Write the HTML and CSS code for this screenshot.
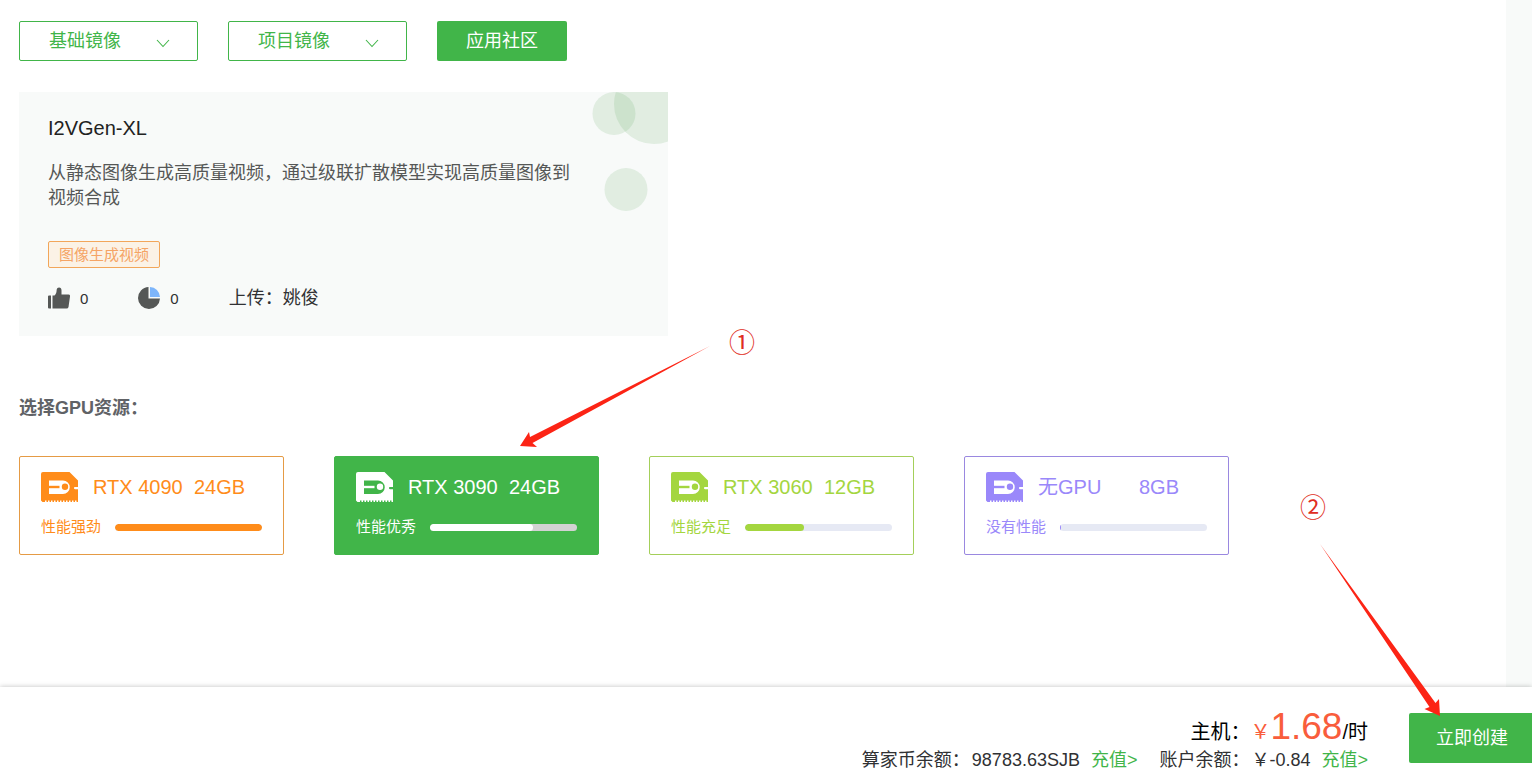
FILE: index.html
```html
<!DOCTYPE html>
<html lang="zh-CN">
<head>
<meta charset="utf-8">
<meta name="viewport" content="width=device-width, initial-scale=1">
<title>创建实例</title>
<link rel="stylesheet" href="styles.css">
</head>
<body>
<svg class="symbols" aria-hidden="true">
  <symbol id="gpu" viewBox="0 0 37 30">
    <path fill="currentColor" fill-rule="evenodd" d="M2 0H28.500L37 8.500V15H34a.8.8 0 0 0 0 2.200H37V30H35.500V28.500H34V30H32.500V28.500H31V30H29.500V28.500H28V30H26.500V28.500H25V30H23.500V28.500H22V30H20.500V28.500H19V30H17.500V28.500H16V30H14.500V28.500H13V30H11.500V28.500H10V30H8.500V28.500H7V30H5.500V28.500H4V30H1.500L0 28.500V2Q0 0 2 0ZM8 8.500H22A6.700 6.700 0 0 1 22 22H8Z"/>
    <path fill="currentColor" d="M7.500 13.800H18.500V16.200H7.500Z"/>
    <circle fill="currentColor" cx="24" cy="14.800" r="3.200"/>
  </symbol>
  <symbol id="chevron" viewBox="0 0 14 9">
    <path d="M1 1L7 7.500L13 1" fill="none" stroke="currentColor" stroke-width="1.100"/>
  </symbol>
</svg>

<main class="page">
  <div class="filters">
    <div class="picker">
      <select class="picker-select" aria-label="基础镜像"><option>基础镜像</option></select>
      <svg class="picker-arrow" aria-hidden="true"><use href="#chevron"/></svg>
    </div>
    <div class="picker">
      <select class="picker-select" aria-label="项目镜像"><option>项目镜像</option></select>
      <svg class="picker-arrow" aria-hidden="true"><use href="#chevron"/></svg>
    </div>
    <button class="community" type="button">应用社区</button>
  </div>

  <article class="model">
    <svg class="model-bubbles" viewBox="0 0 76 120" aria-hidden="true">
      <circle cx="22" cy="21.500" r="21.500"/>
      <circle cx="62" cy="12" r="40"/>
      <circle cx="34" cy="97.500" r="21.500"/>
    </svg>
    <h1 class="model-title">I2VGen-XL</h1>
    <p class="model-text">从静态图像生成高质量视频，通过级联扩散模型实现高质量图像到视频合成</p>
    <span class="tag">图像生成视频</span>
    <div class="stats">
      <span class="stat">
        <svg class="stat-icon" viewBox="0 0 22 24" aria-hidden="true">
          <path fill="#555756" d="M1 8.500H3V21.500H1Q0 21.500 0 20.500V9.500Q0 8.500 1 8.500ZM4.500 8.500H6.500Q8.500 7 8.700 2.500Q9 .5 11 .5Q13.500 .7 13.500 3.500V7.500H20.500Q22.300 7.700 22 9.500L20.500 20Q20.200 21.500 18.500 21.500H4.500Z"/>
        </svg>0</span>
      <span class="stat">
        <svg class="stat-icon" viewBox="0 0 22 24" aria-hidden="true">
          <path fill="#555756" d="M10.500 0A11 11 0 1 0 22 11.500H10.500Z"/>
          <path fill="#7db5fb" d="M12 0A10.500 10.500 0 0 1 22 10H12Z"/>
        </svg>0</span>
      <span class="author">上传：姚俊</span>
    </div>
  </article>

  <h2 class="heading">选择GPU资源：</h2>
  <div class="gpus">
    <label class="gpu gpu-orange">
      <input class="gpu-radio" type="radio" name="gpu">
      <span class="gpu-head"><svg class="gpu-icon" aria-hidden="true"><use href="#gpu"/></svg><span class="gpu-name">RTX 4090</span><span>24GB</span></span>
      <span class="gpu-level"><span>性能强劲</span><span class="bar"><span class="fill" style="width:100%"></span></span></span>
    </label>
    <label class="gpu gpu-green">
      <input class="gpu-radio" type="radio" name="gpu" checked>
      <span class="gpu-head"><svg class="gpu-icon" aria-hidden="true"><use href="#gpu"/></svg><span class="gpu-name">RTX 3090</span><span>24GB</span></span>
      <span class="gpu-level"><span>性能优秀</span><span class="bar"><span class="fill" style="width:70%"></span></span></span>
    </label>
    <label class="gpu gpu-lime">
      <input class="gpu-radio" type="radio" name="gpu">
      <span class="gpu-head"><svg class="gpu-icon" aria-hidden="true"><use href="#gpu"/></svg><span class="gpu-name">RTX 3060</span><span>12GB</span></span>
      <span class="gpu-level"><span>性能充足</span><span class="bar"><span class="fill" style="width:40%"></span></span></span>
    </label>
    <label class="gpu gpu-purple">
      <input class="gpu-radio" type="radio" name="gpu">
      <span class="gpu-head"><svg class="gpu-icon" aria-hidden="true"><use href="#gpu"/></svg><span class="gpu-name">无GPU</span><span>8GB</span></span>
      <span class="gpu-level"><span>没有性能</span><span class="bar"><span class="fill" style="width:1%"></span></span></span>
    </label>
  </div>
</main>

<footer class="checkout">
  <div class="summary">
    <div class="price"><span>主机：</span><span class="yen">￥</span><span class="amount">1.68</span><span>/时</span></div>
    <div class="balances">
      <span class="balance"><span>算家币余额：</span><span>98783.63SJB</span><a class="recharge" href="#">充值&gt;</a></span>
      <span class="balance"><span>账户余额：</span><span>￥-0.84</span><a class="recharge" href="#">充值&gt;</a></span>
    </div>
  </div>
  <button class="create" type="button">立即创建</button>
</footer>

<svg class="arrow arrow-one" viewBox="0 0 190 102" aria-hidden="true">
  <path d="M190 0L10 91L9 86L0 100L17 101L12.500 97Z"/>
</svg>
<span class="step step-one">①</span>
<svg class="arrow arrow-two" viewBox="0 0 121 173" aria-hidden="true">
  <path d="M0 0L109.500 163L104.500 165L120 172L119 155L115.500 159Z"/>
</svg>
<span class="step step-two">②</span>
</body>
</html>
```
FILE: styles.css
```css
* { box-sizing: border-box; }

body {
  margin: 0;
  min-height: 100vh;
  display: flex;
  flex-direction: column;
  position: relative;
  overflow-x: hidden;
  background: #f8faf9;
  color: #303133;
  font: 18px/25px "Liberation Sans", "Noto Sans CJK SC", sans-serif;
}

button, select { font: inherit; }

.symbols { position: absolute; width: 0; height: 0; }

.page {
  flex: 1;
  margin-right: 26px;
  padding: 21px 19px 40px;
  background: #fff;
}

.filters { display: flex; gap: 30px; }

.picker { position: relative; width: 179px; }

.picker-select {
  appearance: none;
  width: 100%;
  height: 40px;
  padding: 0 29px;
  border: 1px solid #41b549;
  border-radius: 2px;
  background: #fff;
  color: #41b549;
}

.picker-arrow {
  position: absolute;
  top: 18px;
  right: 28px;
  width: 14px;
  height: 9px;
  color: #41b549;
  pointer-events: none;
}

.community, .create {
  border: 0;
  border-radius: 2px;
  background: #41b549;
  color: #fff;
}

.community { width: 130px; height: 40px; padding: 0; }

.model {
  position: relative;
  max-width: 649px;
  margin-top: 31px;
  padding: 22px 29px 25px;
  background: #f8faf9;
}

.model-bubbles {
  position: absolute;
  top: 0;
  right: 0;
  width: 76px;
  height: 120px;
  fill: rgba(65, 150, 65, .125);
}

.model-title {
  margin: 0;
  color: #222;
  font-size: 20px;
  font-weight: 400;
  line-height: 28px;
}

.model-text {
  max-width: 530px;
  margin: 19px 0 30px;
  color: #555756;
}

.tag {
  display: block;
  width: max-content;
  padding: 0 10px;
  border: 1px solid #f2a65a;
  border-radius: 2px;
  background: #fbf2e6;
  color: #f5a465;
  font-size: 15px;
}

.stats { display: flex; align-items: center; margin-top: 18px; }

.stat {
  display: flex;
  align-items: center;
  gap: 10px;
  margin-right: 50px;
  font-size: 15px;
}

.stat-icon { width: 22px; height: 24px; }

.heading {
  margin: 60px 0 36px;
  color: #606266;
  font-size: 18px;
  line-height: 24px;
}

.gpus { display: flex; flex-wrap: wrap; gap: 50px; }

.gpu {
  --track: #e6e9f4;
  position: relative;
  width: 265px;
  padding: 15px 21px;
  border: 1px solid;
  border-radius: 2px;
  cursor: pointer;
}

.gpu-orange { border-color: #e59b45; color: #ff8c1a; }
.gpu-green { --track: #d2d2d2; border-color: #41b549; background: #41b549; color: #fff; }
.gpu-lime { border-color: #a4cf5a; color: #a4d63f; }
.gpu-purple { border-color: #9a88e0; color: #9a88fa; }

.gpu-radio { position: absolute; opacity: 0; }

.gpu-head { display: flex; align-items: center; font-size: 20px; line-height: 30px; }
.gpu-icon { width: 37px; height: 30px; margin-right: 15px; }
.gpu-name { width: 101px; }

.gpu-level {
  display: flex;
  align-items: center;
  gap: 14px;
  margin-top: 13px;
  font-size: 15px;
  line-height: 24px;
}

.bar {
  flex: 1;
  height: 7px;
  border-radius: 4px;
  background: var(--track);
  overflow: hidden;
}

.fill { display: block; height: 100%; border-radius: 4px; background: currentColor; }

.checkout {
  position: relative;
  display: flex;
  align-items: flex-start;
  justify-content: flex-end;
  gap: 41px;
  padding: 24px 0 6px;
  background: #fff;
  box-shadow: 0 0 5px rgba(0, 0, 0, .25);
}

.summary { display: flex; flex-direction: column; align-items: flex-end; }

.price { display: flex; align-items: baseline; color: #000; font-size: 20px; line-height: 32px; }
.yen { color: #f95d3c; }
.amount { color: #f95d3c; font-size: 37px; }

.balances { display: flex; gap: 22px; }
.balance { display: flex; gap: 2px; }
.recharge { margin-left: 9px; color: #41b549; text-decoration: none; }

.create { height: 50px; margin-top: 2px; padding: 0 24px 0 27px; border-radius: 2px 0 0 2px; }

.arrow { position: absolute; fill: #fc2415; pointer-events: none; }
.arrow-one { left: 520px; top: 346px; width: 190px; height: 102px; }
.arrow-two { left: 1320px; top: 544px; width: 121px; height: 173px; }

.step { position: absolute; color: #e02d22; font-size: 26px; line-height: 26px; }
.step-one { left: 729px; top: 330px; }
.step-two { left: 1300px; top: 495px; }
```
